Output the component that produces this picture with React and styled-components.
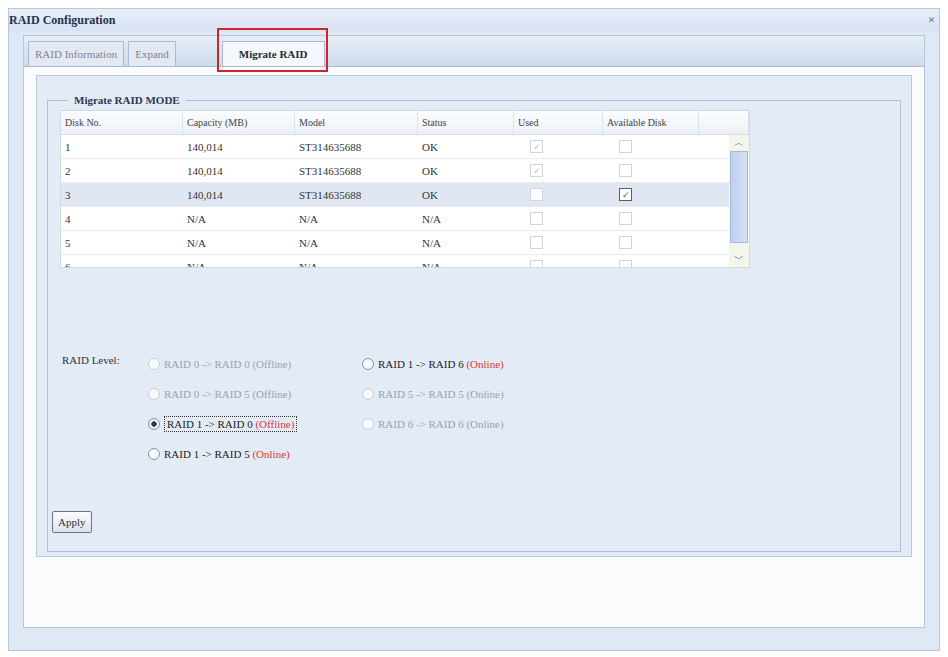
import React from "react";
import styled, { createGlobalStyle } from "styled-components";

const G = createGlobalStyle`
  body { margin: 0; background: #fff; font-family: "Liberation Serif", "DejaVu Serif", serif; font-size: 11px; color: #333; }
`;

const Window = styled.div`
  margin: 8px 8px 6px 8px; height: 643px; box-sizing: border-box;
  background: #dfe8f5; border: 1px solid #b8c6da; display: flex; flex-direction: column;
`;
const TitleBar = styled.div`
  height: 22px; display: flex; align-items: center; justify-content: space-between; padding: 0 4px 0 0;
  background: linear-gradient(#e9eff8, #d7e2f1);
`;
const Title = styled.div`font-weight: bold; font-size: 12px; color: #1f3150;`;
const Close = styled.div`font-size: 13px; color: #556;`;
const Frame = styled.div`
  flex: 1; margin: 4px 14px 22px 14px; background: #fbfcfe; border: 1px solid #b6c4d8; display: flex; flex-direction: column;
`;
const TabBar = styled.div`
  height: 30px; display: flex; align-items: flex-end; gap: 4px; padding: 0 4px;
  background: linear-gradient(#e6edf7, #cfdbec); border-bottom: 1px solid #a9bbd3;
`;
const Tab = styled.div`
  position: relative; height: 24px; display: flex; align-items: center; padding: 0 ${p => p.$active ? "16px" : "6px"};
  font-size: 11px; color: ${p => p.$active ? "#1f2a3c" : "#7a8595"}; font-weight: ${p => p.$active ? "bold" : "normal"};
  background: ${p => p.$active ? "#f4f7fc" : "#e2e9f3"}; border: 1px solid #aab9cf; border-bottom: none;
  margin-left: ${p => p.$active ? "42px" : "0"};
`;
const RedBox = styled.div`
  position: absolute; left: -6px; right: -4px; top: -14px; bottom: -6px; border: 2px solid #d3232a;
`;
const Content = styled.div`
  margin: 8px 12px 0 12px; height: 482px; box-sizing: border-box; background: #e3ebf7; border: 1px solid #b9c7da;
  padding: 18px 10px 0 10px;
`;
const Fieldset = styled.fieldset`
  margin: 0; height: 458px; box-sizing: border-box; border: 1px solid #b2bfd0; padding: 4px 10px 0 12px;
`;
const Legend = styled.legend`font-weight: bold; font-size: 11px; color: #2c3a50; padding: 0 6px; margin-left: 8px;`;
const Table = styled.div`width: 688px; background: #fff; border: 1px solid #d0d9e6;`;
const Header = styled.div`
  display: grid; grid-template-columns: 122px 112px 123px 96px 89px 96px 50px; height: 23px;
  background: linear-gradient(#fbfcfe, #edf1f7); border-bottom: 1px solid #d6dde8;
`;
const HCell = styled.div`display: flex; align-items: center; padding-left: 4px; font-size: 10px; color: #444; border-right: 1px solid #dde3ec;`;
const Body = styled.div`position: relative; height: 132px; overflow: hidden;`;
const Row = styled.div`
  display: grid; grid-template-columns: 122px 112px 123px 96px 89px 96px 50px; height: 23px;
  background: ${p => p.$sel ? "#e0e7f3" : "#fff"}; border-bottom: 1px solid #e6ebf2;
`;
const Cell = styled.div`display: flex; align-items: center; padding-left: 4px; font-size: 11px; color: #333;`;
const Check = styled.div`
  width: 11px; height: 11px; margin-left: 12px; border: 1px solid ${p => p.$on ? "#4d6a4d" : "#cfd6df"};
  background: #fff; display: flex; align-items: center; justify-content: center; font-size: 9px;
  color: ${p => p.$dim ? "#b8c0c8" : "#2e7d32"};
`;
const Scroll = styled.div`
  position: absolute; right: 0; top: 0; bottom: 0; width: 20px; background: #f3f6ea;
  display: flex; flex-direction: column; align-items: center;
`;
const Arrow = styled.div`font-size: 10px; color: #3a5a9a; height: 16px; display: flex; align-items: center;`;
const Thumb = styled.div`width: 16px; height: 90px; background: linear-gradient(90deg, #bfd0ec, #d4e0f4); border: 1px solid #a6badb;`;
const Spacer = styled.div`flex: 1;`;
const Levels = styled.div`display: grid; grid-template-columns: 86px 214px 1fr; margin-top: 86px; margin-left: 2px;`;
const Label = styled.div`font-size: 11px; color: #333;`;
const Col = styled.div`display: flex; flex-direction: column; gap: 11px;`;
const Opt = styled.div`
  display: flex; align-items: center; gap: 4px; font-size: 11px; height: 19px;
  color: ${p => p.$dis ? "#9aa2ae" : "#222"};
`;
const Radio = styled.span`
  width: 10px; height: 10px; border-radius: 50%; border: 1px solid ${p => p.$dis ? "#c8ced6" : "#8a94a2"};
  background: ${p => p.$on ? "radial-gradient(#2d3b52 35%, #e8edf4 40%)" : "#f6f8fb"};
`;
const Focus = styled.span`border: 1px dotted #333; padding: 1px 2px;`;
const Red = styled.span`color: #e0362e;`;
const Apply = styled.button`
  margin-top: 48px; margin-left: -8px; font-family: inherit; font-size: 11px; padding: 4px 5px;
  background: linear-gradient(#fafbfd, #dde3ec); border: 1px solid #6a7486; border-radius: 2px; color: #333;
`;

const rows = [
  ["1", "140,014", "ST314635688", "OK", true, false],
  ["2", "140,014", "ST314635688", "OK", true, false],
  ["3", "140,014", "ST314635688", "OK", false, true],
  ["4", "N/A", "N/A", "N/A", false, false],
  ["5", "N/A", "N/A", "N/A", false, false],
  ["6", "N/A", "N/A", "N/A", false, false],
];

export default function App() {
  return (
    <>
      <G />
      <Window>
        <TitleBar><Title>RAID Configuration</Title><Close>×</Close></TitleBar>
        <Frame>
          <TabBar>
            <Tab>RAID Information</Tab>
            <Tab>Expand</Tab>
            <Tab $active>Migrate RAID<RedBox /></Tab>
          </TabBar>
          <Content>
            <Fieldset>
              <Legend>Migrate RAID MODE</Legend>
              <Table>
                <Header>
                  {["Disk No.", "Capacity (MB)", "Model", "Status", "Used", "Available Disk", ""].map((h, i) => <HCell key={i}>{h}</HCell>)}
                </Header>
                <Body>
                  {rows.map((r, i) => (
                    <Row key={i} $sel={i === 2}>
                      <Cell>{r[0]}</Cell><Cell>{r[1]}</Cell><Cell>{r[2]}</Cell><Cell>{r[3]}</Cell>
                      <Cell><Check $dim>{r[4] ? "✓" : ""}</Check></Cell>
                      <Cell><Check $on={r[5]}>{r[5] ? "✓" : ""}</Check></Cell>
                      <Cell />
                    </Row>
                  ))}
                  <Scroll><Arrow>︿</Arrow><Thumb /><Spacer /><Arrow>﹀</Arrow></Scroll>
                </Body>
              </Table>
              <Levels>
                <Label>RAID Level:</Label>
                <Col>
                  <Opt $dis><Radio $dis /><span>RAID 0 -&gt; RAID 0 (Offline)</span></Opt>
                  <Opt $dis><Radio $dis /><span>RAID 0 -&gt; RAID 5 (Offline)</span></Opt>
                  <Opt><Radio $on /><Focus>RAID 1 -&gt; RAID 0 <Red>(Offline)</Red></Focus></Opt>
                  <Opt><Radio /><span>RAID 1 -&gt; RAID 5 <Red>(Online)</Red></span></Opt>
                </Col>
                <Col>
                  <Opt><Radio /><span>RAID 1 -&gt; RAID 6 <Red>(Online)</Red></span></Opt>
                  <Opt $dis><Radio $dis /><span>RAID 5 -&gt; RAID 5 (Online)</span></Opt>
                  <Opt $dis><Radio $dis /><span>RAID 6 -&gt; RAID 6 (Online)</span></Opt>
                </Col>
              </Levels>
              <Apply>Apply</Apply>
            </Fieldset>
          </Content>
        </Frame>
      </Window>
    </>
  );
}
